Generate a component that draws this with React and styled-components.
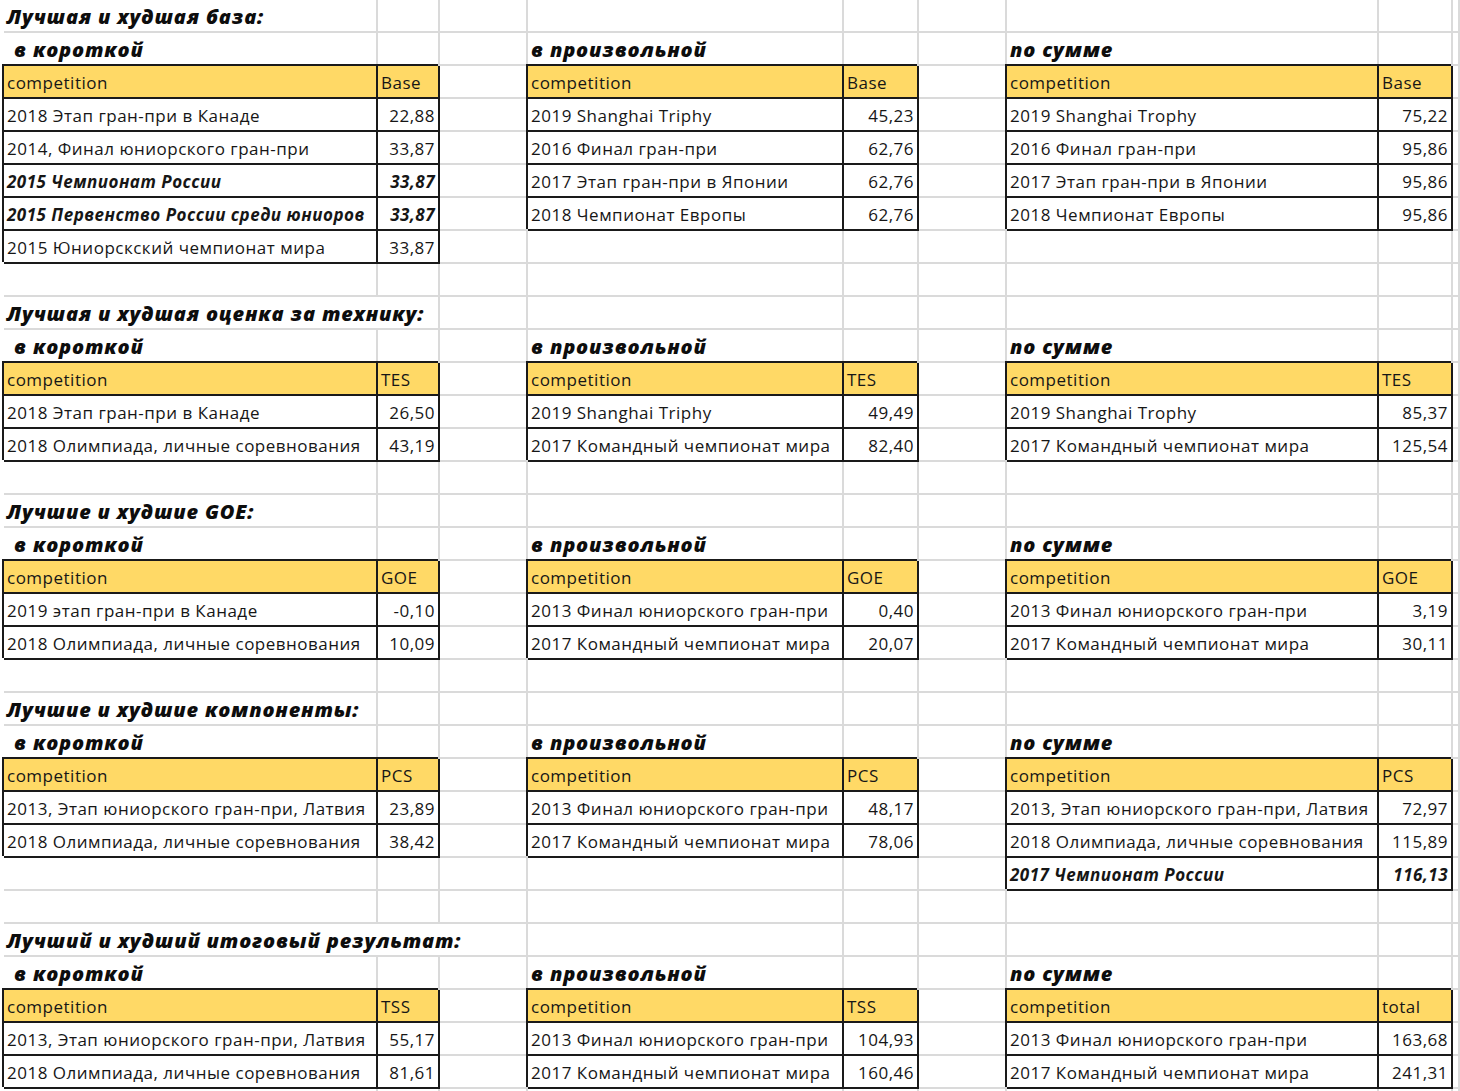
import React from 'react';
import styled, { createGlobalStyle } from 'styled-components';

const GRID = '#dadada';
const INK = '#1a1a1a';

const GlobalStyle = createGlobalStyle`
  html, body {
    margin: 0;
    padding: 0;
    background: #fff;
  }
  body {
    font-family: "Open Sans", "Noto Sans", sans-serif;
    color: #161616;
  }
`;

const Sheet = styled.div`
  width: 1460px;
  height: 1091px;
  overflow: hidden;
  padding-left: 4px;
  box-sizing: border-box;
`;

const Row = styled.div`
  display: grid;
  grid-template-columns: 374px 62px 88px 316px 75px 88px 372px 74px 1fr;
  height: 33px;
`;

const Cell = styled.div`
  grid-column: span ${p => p.$span || 1};
  box-sizing: border-box;
  height: 33px;
  display: flex;
  align-items: center;
  justify-content: ${p => (p.$num ? 'flex-end' : 'flex-start')};
  padding: 2px ${p => (p.$num ? '3px' : '0')} 0 ${p => p.$indent || 3}px;
  border-right: 2px solid ${p => (p.$boxed ? INK : GRID)};
  border-bottom: 2px solid ${p => (p.$boxed ? INK : GRID)};
  box-shadow: ${p => (p.$boxed ? `-2px -2px 0 ${INK}` : 'none')};
  background: ${p => (p.$head ? '#ffd966' : 'transparent')};
  white-space: nowrap;
  font-size: 17px;
  letter-spacing: 0.5px;
  font-weight: ${p => (p.$strong ? 700 : 400)};
  font-style: ${p => (p.$strong ? 'italic' : 'normal')};
`;

const Title = styled(Cell)`
  font-size: 20px;
  font-weight: 800;
  font-style: italic;
  letter-spacing: 0.8px;
  color: #0d0d0d;
`;

const sections = [
  {
    title: 'Лучшая и худшая база:',
    span: 1,
    metric: ['Base', 'Base', 'Base'],
    short: [
      ['2018 Этап гран-при в Канаде', '22,88'],
      ['2014, Финал юниорского гран-при', '33,87'],
      ['2015 Чемпионат России', '33,87', true],
      ['2015 Первенство России среди юниоров', '33,87', true],
      ['2015 Юниорскский чемпионат мира', '33,87'],
    ],
    free: [
      ['2019 Shanghai Triphy', '45,23'],
      ['2016 Финал гран-при', '62,76'],
      ['2017 Этап гран-при в Японии', '62,76'],
      ['2018 Чемпионат Европы', '62,76'],
    ],
    sum: [
      ['2019 Shanghai Trophy', '75,22'],
      ['2016 Финал гран-при', '95,86'],
      ['2017 Этап гран-при в Японии', '95,86'],
      ['2018 Чемпионат Европы', '95,86'],
    ],
  },
  {
    title: 'Лучшая и худшая оценка за технику:',
    span: 2,
    metric: ['TES', 'TES', 'TES'],
    short: [
      ['2018 Этап гран-при в Канаде', '26,50'],
      ['2018 Олимпиада, личные соревнования', '43,19'],
    ],
    free: [
      ['2019 Shanghai Triphy', '49,49'],
      ['2017 Командный чемпионат мира', '82,40'],
    ],
    sum: [
      ['2019 Shanghai Trophy', '85,37'],
      ['2017 Командный чемпионат мира', '125,54'],
    ],
  },
  {
    title: 'Лучшие и худшие GOE:',
    span: 1,
    metric: ['GOE', 'GOE', 'GOE'],
    short: [
      ['2019 этап гран-при в Канаде', '-0,10'],
      ['2018 Олимпиада, личные соревнования', '10,09'],
    ],
    free: [
      ['2013 Финал юниорского гран-при', '0,40'],
      ['2017 Командный чемпионат мира', '20,07'],
    ],
    sum: [
      ['2013 Финал юниорского гран-при', '3,19'],
      ['2017 Командный чемпионат мира', '30,11'],
    ],
  },
  {
    title: 'Лучшие и худшие компоненты:',
    span: 1,
    metric: ['PCS', 'PCS', 'PCS'],
    short: [
      ['2013, Этап юниорского гран-при, Латвия', '23,89'],
      ['2018 Олимпиада, личные соревнования', '38,42'],
    ],
    free: [
      ['2013 Финал юниорского гран-при', '48,17'],
      ['2017 Командный чемпионат мира', '78,06'],
    ],
    sum: [
      ['2013, Этап юниорского гран-при, Латвия', '72,97'],
      ['2018 Олимпиада, личные соревнования', '115,89'],
      ['2017 Чемпионат России', '116,13', true],
    ],
  },
  {
    title: 'Лучший и худший итоговый результат:',
    span: 3,
    metric: ['TSS', 'TSS', 'total'],
    short: [
      ['2013, Этап юниорского гран-при, Латвия', '55,17'],
      ['2018 Олимпиада, личные соревнования', '81,61'],
    ],
    free: [
      ['2013 Финал юниорского гран-при', '104,93'],
      ['2017 Командный чемпионат мира', '160,46'],
    ],
    sum: [
      ['2013 Финал юниорского гран-при', '163,68'],
      ['2017 Командный чемпионат мира', '241,31'],
    ],
  },
];

const subtitles = ['в короткой', 'в произвольной', 'по сумме'];

const blanks = (n, key) =>
  Array.from({ length: n }, (_, i) => <Cell key={`${key}-${i}`} />);

const EmptyRow = () => <Row>{blanks(9, 'e')}</Row>;

const Section = ({ section }) => {
  const tables = [section.short, section.free, section.sum];
  const count = Math.max(...tables.map(t => t.length));

  return (
    <>
      <Row>
        <Title $span={section.span}>{section.title}</Title>
        {blanks(9 - section.span, 't')}
      </Row>
      <Row>
        {subtitles.map((sub, i) => (
          <React.Fragment key={sub}>
            <Title $indent={i === 0 ? 10 : 3}>{sub}</Title>
            {blanks(2, `s${i}`)}
          </React.Fragment>
        ))}
      </Row>
      <Row>
        {section.metric.map((m, i) => (
          <React.Fragment key={i}>
            <Cell $boxed $head>competition</Cell>
            <Cell $boxed $head>{m}</Cell>
            <Cell />
          </React.Fragment>
        ))}
      </Row>
      {Array.from({ length: count }, (_, r) => (
        <Row key={r}>
          {tables.map((t, i) => {
            const item = t[r];
            if (!item) return <React.Fragment key={i}>{blanks(3, `b${r}${i}`)}</React.Fragment>;
            const [name, value, strong] = item;
            return (
              <React.Fragment key={i}>
                <Cell $boxed $strong={strong}>{name}</Cell>
                <Cell $boxed $num $strong={strong}>{value}</Cell>
                <Cell />
              </React.Fragment>
            );
          })}
        </Row>
      ))}
      <EmptyRow />
    </>
  );
};

const App = () => (
  <>
    <GlobalStyle />
    <Sheet>
      {sections.map((s, i) => (
        <Section key={i} section={s} />
      ))}
    </Sheet>
  </>
);

export default App;
